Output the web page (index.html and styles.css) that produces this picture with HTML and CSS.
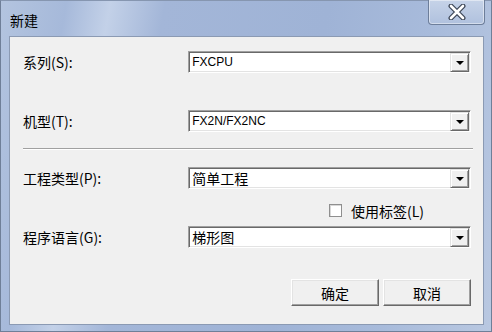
FILE: index.html
```html
<!DOCTYPE html>
<html lang="zh-CN">
<head>
    <meta charset="UTF-8">
    <title>新建</title>
    <link rel="stylesheet" href="styles.css">
</head>
<body>
    <div class="window">
        <div class="titlebar">
            <span class="title">新建</span>
            <button class="close-btn">
                <svg width="20" height="16" viewBox="0 0 20 16">
                    <path d="M4 2 L16 14 M16 2 L4 14" stroke="#3c4656" stroke-width="5" stroke-linecap="round"/>
                    <path d="M4 2 L16 14 M16 2 L4 14" stroke="#ffffff" stroke-width="2.6" stroke-linecap="round"/>
                </svg>
            </button>
        </div>

        <div class="client">
            <div class="row">
                <label class="label">系列(S):</label>
                <div class="combo">
                    <span class="combo-text">FXCPU</span>
                    <span class="combo-arrow"></span>
                </div>
            </div>

            <div class="row row-2">
                <label class="label">机型(T):</label>
                <div class="combo">
                    <span class="combo-text">FX2N/FX2NC</span>
                    <span class="combo-arrow"></span>
                </div>
            </div>

            <div class="separator"></div>

            <div class="row row-3">
                <label class="label">工程类型(P):</label>
                <div class="combo">
                    <span class="combo-text cjk">简单工程</span>
                    <span class="combo-arrow"></span>
                </div>
            </div>

            <div class="check-row">
                <span class="checkbox"></span>
                <span class="check-label">使用标签(L)</span>
            </div>

            <div class="row row-4">
                <label class="label">程序语言(G):</label>
                <div class="combo">
                    <span class="combo-text cjk">梯形图</span>
                    <span class="combo-arrow"></span>
                </div>
            </div>

            <div class="buttons">
                <button class="btn">确定</button>
                <button class="btn">取消</button>
            </div>
        </div>
    </div>
</body>
</html>
```

FILE: styles.css
```css
* {
    margin: 0;
    padding: 0;
    box-sizing: border-box;
}

body {
    width: 492px;
    height: 332px;
    overflow: hidden;
    font-family: "Noto Sans CJK SC", "Liberation Sans", sans-serif;
    font-size: 14px;
    color: #000;
}

.window {
    width: 492px;
    height: 332px;
    display: flex;
    flex-direction: column;
    padding: 0 7px 6px 8px;
    background: linear-gradient(100deg, #b3c4df 0%, #a6b9da 12%, #c3d1e8 20%, #a3b6d8 30%, #9fb3d6 60%, #a8bbdb 80%, #b9c8e1 100%);
    border: 1px solid #6f7f98;
    border-top-color: #8696b0;
}

.titlebar {
    height: 35px;
    display: flex;
    align-items: flex-start;
    justify-content: space-between;
}

.title {
    margin-top: 9px;
    margin-left: 1px;
    font-size: 14px;
    line-height: 20px;
    color: #000;
}

.close-btn {
    width: 57px;
    height: 25px;
    margin-top: -1px;
    margin-right: -1px;
    border: 1px solid #6d7e9a;
    border-top: none;
    border-radius: 0 0 4px 4px;
    background: linear-gradient(#c6d3e8, #b0c1de);
    box-shadow: inset 0 0 0 1px rgba(255, 255, 255, 0.45);
    display: flex;
    align-items: center;
    justify-content: center;
}

.client {
    flex: 1;
    background: #f0f0f0;
    border: 1px solid #8b9ab3;
    padding: 14px 12px 0 13px;
    display: flex;
    flex-direction: column;
}

.row {
    display: flex;
    align-items: center;
    height: 22px;
}

.row-2 {
    margin-top: 37px;
}

.row-3 {
    margin-top: 17px;
}

.row-4 {
    margin-top: 9px;
}

.label {
    width: 166px;
    font-size: 14px;
    line-height: 22px;
}

.combo {
    width: 284px;
    height: 22px;
    background: #fff;
    border-top: 1px solid #a0a0a0;
    border-left: 1px solid #a0a0a0;
    border-right: 1px solid #fff;
    border-bottom: 1px solid #fff;
    box-shadow: inset 1px 1px 0 #696969, inset -1px -1px 0 #e3e3e3;
    display: flex;
    align-items: center;
    justify-content: space-between;
    padding: 1px 1px 1px 3px;
}

.combo-text {
    font-family: "Liberation Sans", sans-serif;
    font-size: 12px;
    line-height: 18px;
}

.combo-text.cjk {
    font-family: "Noto Sans CJK SC", sans-serif;
    font-size: 14px;
}

.combo-arrow {
    width: 19px;
    height: 19px;
    background: #f0f0f0;
    border-top: 1px solid #e3e3e3;
    border-left: 1px solid #e3e3e3;
    border-right: 1px solid #696969;
    border-bottom: 1px solid #696969;
    box-shadow: inset 1px 1px 0 #fff, inset -1px -1px 0 #a0a0a0;
    display: flex;
    align-items: center;
    justify-content: center;
}

.combo-arrow::after {
    content: "";
    width: 0;
    height: 0;
    border-left: 4px solid transparent;
    border-right: 4px solid transparent;
    border-top: 4px solid #000;
    margin-top: 1px;
}

.separator {
    margin-top: 16px;
    width: 450px;
    height: 2px;
    border-top: 1px solid #a0a0a0;
    border-bottom: 1px solid #fff;
}

.check-row {
    margin-top: 15px;
    margin-left: 306px;
    height: 13px;
    display: flex;
    align-items: center;
    gap: 9px;
}

.checkbox {
    width: 13px;
    height: 13px;
    background: #fff;
    border: 1px solid #8f8f8f;
    box-shadow: inset 1px 1px 0 #d8d8d8;
}

.check-label {
    font-size: 14px;
    line-height: 18px;
}

.buttons {
    margin-top: 31px;
    display: flex;
    justify-content: flex-end;
    gap: 4px;
}

.btn {
    width: 88px;
    height: 27px;
    font-family: "Noto Sans CJK SC", sans-serif;
    font-size: 14px;
    background: #f0f0f0;
    border-top: 1px solid #fff;
    border-left: 1px solid #fff;
    border-right: 1px solid #696969;
    border-bottom: 1px solid #696969;
    box-shadow: inset -1px -1px 0 #a0a0a0, inset 1px 1px 0 #e3e3e3;
}
```
